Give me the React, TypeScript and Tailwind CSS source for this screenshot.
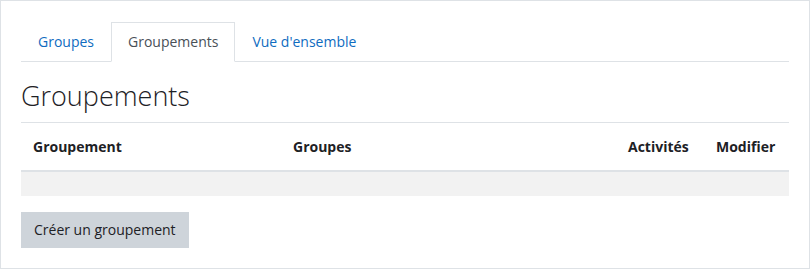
export default function App() {
  const tabs = ["Groupes", "Groupements", "Vue d'ensemble"]
  const active = "Groupements"
  const th = "text-left font-bold px-3 py-3 leading-[23px] border-t border-b-2 border-[#dee2e6]"

  return (
    <div
      className="w-[810px] h-[269px] border border-[#dee2e6] bg-white px-5 pt-[21px] pb-5 text-[14px] text-[#1d2125]"
      style={{ fontFamily: '"Open Sans", "Noto Sans", sans-serif' }}
    >
      <ul className="flex border-b border-[#dee2e6]">
        {tabs.map((t) => (
          <li key={t} className="-mb-px">
            <a
              className={
                t === active
                  ? "block px-4 py-2 leading-[22px] border border-[#dee2e6] border-b-white bg-white text-[#495057]"
                  : "block px-4 py-2 leading-[22px] border border-transparent text-[#0f6cbf]"
              }
            >
              {t}
            </a>
          </li>
        ))}
      </ul>

      <h2 className="mt-[17px] mb-[9px] text-[27px] font-light leading-[34px] text-[#1d2125]">Groupements</h2>

      <table className="w-full mb-4 border-separate border-spacing-0">
        <thead>
          <tr>
            <th className={`w-[260px] ${th}`}>Groupement</th>
            <th className={th}>Groupes</th>
            <th className={`w-[88px] ${th}`}>Activités</th>
            <th className={`w-[85px] ${th}`}>Modifier</th>
          </tr>
        </thead>
        <tbody>
          <tr className="bg-[#f2f2f2]">
            <td className="h-6 p-0" colSpan={4}></td>
          </tr>
        </tbody>
      </table>

      <button className="px-3 py-1.5 leading-[22px] border border-[#ced4da] bg-[#ced4da] text-[#1d2125]">
        Créer un groupement
      </button>
    </div>
  )
}
